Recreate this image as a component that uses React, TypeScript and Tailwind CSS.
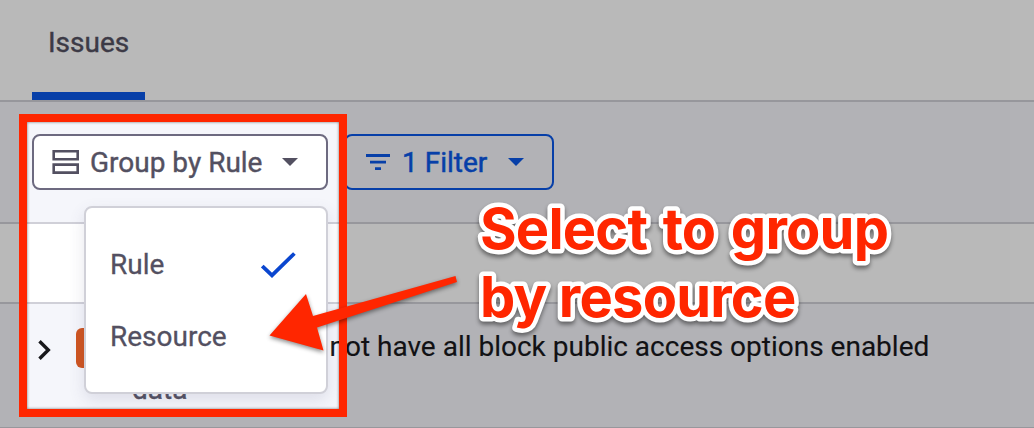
import React from "react";

function Caret() {
  return (
    <svg width="16" height="8" viewBox="0 0 16 8" fill="currentColor">
      <path d="M0 0H16L8 8Z" />
    </svg>
  );
}

function Tabs() {
  return (
    <header className="flex h-[102px] shrink-0 border-b-2 border-[#d0d0d8] bg-white pl-8">
      <div className="flex h-[100px] w-[113px] flex-col border-b-8 border-[#0a58e8] pt-[25px] pl-4 text-[28px] leading-9 text-[#535061] [-webkit-text-stroke:0.4px]">
        Issues
      </div>
    </header>
  );
}

function GroupMenu() {
  return (
    <ul className="absolute top-[72px] left-[52px] flex h-[188px] w-[244px] flex-col rounded-lg border-2 border-[#d0d0d8] bg-white pt-[21px] text-[28px] leading-[72px] text-[#535061] shadow-[0_6px_16px_rgba(80,80,120,0.14)] [-webkit-text-stroke:0.3px]">
      <li className="flex h-[72px] items-center justify-between pr-[30px] pl-6">
        <span>Rule</span>
        <svg width="35" height="26" viewBox="0 0 35 26" fill="none" stroke="#0a46cf" strokeWidth="3.8">
          <path d="M1.3 14L11 23.3L33.4 1.5" />
        </svg>
      </li>
      <li className="flex h-[72px] items-center pl-6">Resource</li>
    </ul>
  );
}

function Toolbar() {
  return (
    <div className="flex h-[122px] shrink-0 gap-4 border-b-2 border-[#d0d0d8] bg-[#f5f6fb] pt-8 pl-8 text-[28px]">
      <div className="relative z-10 h-14 w-[296px]">
        <button className="flex h-14 w-[296px] items-center rounded-lg border-2 border-[#6d6a80] bg-white pl-[18px] text-[#535061]">
          <svg width="28" height="24" viewBox="0 0 28 24" fill="none" stroke="currentColor" strokeWidth="2.6">
            <path d="M1.7 1.3H25.7V9.3H1.7ZM1.7 14.6H25.7V22.6H1.7Z" />
          </svg>
          <span className="ml-[10px] w-[192px] pt-0.5 text-left whitespace-nowrap [-webkit-text-stroke:0.4px]">Group by Rule</span>
          <Caret />
        </button>
        <GroupMenu />
      </div>
      <button className="flex h-14 w-[210px] items-center rounded-lg border-2 border-[#0a58e8] pl-5 text-[#0a58e8]">
        <svg width="24" height="16" viewBox="0 0 24 16" fill="currentColor">
          <path d="M0 0H24V3H0ZM4 6.7H20V9.4H4ZM9 13.3H15V16H9Z" />
        </svg>
        <span className="ml-3 w-[106px] pt-0.5 text-left whitespace-nowrap [-webkit-text-stroke:0.5px]">1 Filter</span>
        <Caret />
      </button>
    </div>
  );
}

function IssueRow() {
  return (
    <div className="flex h-[125px] shrink-0 border-b-2 border-[#d0d0d8] bg-[#f5f6fb] pl-[38px]">
      <svg className="mt-9 shrink-0" width="13" height="20" viewBox="0 0 13 20" fill="none" stroke="#18181c" strokeWidth="3.4">
        <path d="M1.5 1.2L10.3 10L1.5 18.8" />
      </svg>
      <div className="mt-6 ml-[25px] h-10 w-14 shrink-0 rounded-md bg-[#cf541f]" />
      <div className="flex flex-col">
        <div className="mt-[23px] ml-[197.5px] text-[28px] leading-10 whitespace-nowrap text-[#18181c] [-webkit-text-stroke:0.15px]">
          not have all block public access options enabled
        </div>
        <div className="mt-[7px] text-[28px] leading-8 text-[#535061] [-webkit-text-stroke:0.4px]">data</div>
      </div>
    </div>
  );
}

function Callout() {
  return (
    <>
      <div className="absolute top-[114px] left-[19px] z-20 h-[303px] w-[328px] border-8 border-[#ff2600] shadow-[inset_0_0_3px_rgba(0,0,0,0.55),0_0_0_1200px_rgba(0,0,0,0.275)]" />
      <svg className="absolute top-[270px] left-[260px] z-30 drop-shadow-[0_2px_2px_rgba(0,0,0,0.45)]" width="210" height="90" viewBox="260 270 210 90">
        <path fill="#ff2600" d="M455.5 276L457 282L317 327.5L323.5 350.5L269.5 335.5L306 294L313 316Z" />
      </svg>
      <svg
        className="absolute top-[190px] left-[470px] z-30 text-[56px] font-bold [font-family:Inter,'Liberation_Sans',sans-serif] drop-shadow-[0_3px_2px_rgba(0,0,0,0.45)] [paint-order:stroke_fill]"
        width="440"
        height="145"
        fill="#ff2600"
        stroke="white"
        strokeWidth="9"
        strokeLinejoin="round"
      >
        <text x="10" y="59" className="tracking-[-0.8px] [word-spacing:3px]">Select to group</text>
        <text x="10" y="127" className="tracking-[-0.8px]">by resource</text>
      </svg>
    </>
  );
}

export default function App() {
  return (
    <main className="relative flex h-[428px] w-[1034px] flex-col overflow-hidden bg-white [font-family:Roboto,sans-serif]">
      <Tabs />
      <Toolbar />
      <div className="h-20 shrink-0 border-b-2 border-[#d0d0d8] bg-white" />
      <IssueRow />
      <Callout />
    </main>
  );
}
